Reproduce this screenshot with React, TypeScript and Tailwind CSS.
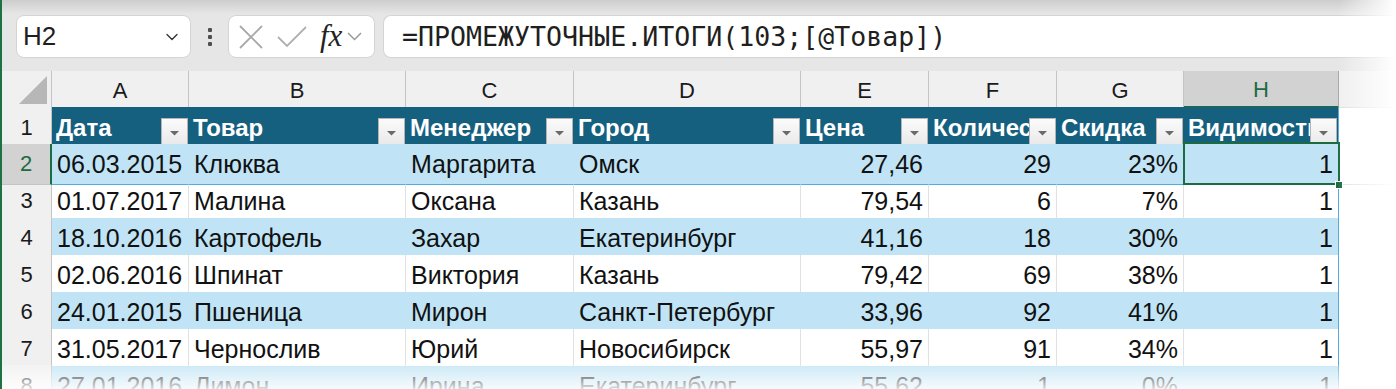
import React from 'react';
import { ChevronDown } from 'lucide-react';

// Excel-like sheet: formula bar + a styled table (Table Style Medium 2)

const GRID = 'grid grid-cols-[50px_137px_217px_168px_227px_128px_128px_127px_155px_1fr]';

const HEADERS = ['Дата', 'Товар', 'Менеджер', 'Город', 'Цена', 'Количество', 'Скидка', 'Видимость'];

const ROWS: string[][] = [
  ['06.03.2015', 'Клюква', 'Маргарита', 'Омск', '27,46', '29', '23%', '1'],
  ['01.07.2017', 'Малина', 'Оксана', 'Казань', '79,54', '6', '7%', '1'],
  ['18.10.2016', 'Картофель', 'Захар', 'Екатеринбург', '41,16', '18', '30%', '1'],
  ['02.06.2016', 'Шпинат', 'Виктория', 'Казань', '79,42', '69', '38%', '1'],
  ['24.01.2015', 'Пшеница', 'Мирон', 'Санкт-Петербург', '33,96', '92', '41%', '1'],
  ['31.05.2017', 'Чернослив', 'Юрий', 'Новосибирск', '55,97', '91', '34%', '1'],
  ['27.01.2016', 'Лимон', 'Ирина', 'Екатеринбург', '55,62', '1', '0%', '1'],
];

const LETTERS = ['A', 'B', 'C', 'D', 'E', 'F', 'G', 'H'];

const FilterButton: React.FC = () => (
  <div className="flex-shrink-0 w-[27px] h-[28px] border border-[#b4b4b4] bg-gradient-to-b from-[#fbfbfb] to-[#e9e9e9] flex items-center justify-center pt-[2px]">
    <svg width="9" height="5" viewBox="0 0 9 5">
      <path d="M0 0h9L4.5 4.5z" fill="#6a6a6a" />
    </svg>
  </div>
);

const FormulaBar: React.FC = () => (
  <div className="h-[71px] bg-[#e6e6e6] flex items-start pt-[15px] pl-[14px]">
    {/* Name box */}
    <div className="w-[175px] h-[43px] rounded-[8px] bg-white border border-[#d4d4d4] flex items-center justify-between pl-[6px] pr-[8px]">
      <span className="text-[26px] text-[#1f1f1f] leading-normal">H2</span>
      <ChevronDown size={20} strokeWidth={1.6} color="#333" />
    </div>
    {/* dots */}
    <div className="w-[37px] h-[43px] flex flex-col items-center justify-center gap-[3px]">
      <span className="w-[4px] h-[4px] bg-[#4f4f4f] rounded-[1px]" />
      <span className="w-[4px] h-[4px] bg-[#4f4f4f] rounded-[1px]" />
      <span className="w-[4px] h-[4px] bg-[#4f4f4f] rounded-[1px]" />
    </div>
    {/* cancel / enter / fx */}
    <div className="w-[147px] h-[43px] rounded-[8px] bg-white border border-[#d4d4d4] flex items-center pl-[9px]">
      <svg width="26" height="26" viewBox="0 0 26 26" fill="none" stroke="#a9a9a9" strokeWidth="1.8">
        <path d="M2 2l22 22M24 2L2 24" />
      </svg>
      <svg className="ml-[13px]" width="30" height="22" viewBox="0 0 30 22" fill="none" stroke="#b0b0b0" strokeWidth="1.8">
        <path d="M1 11l9 9L29 1" />
      </svg>
      <span className="ml-[13px] text-[31px] italic text-[#222] leading-normal [font-family:'Liberation_Serif',serif]">fx</span>
      <svg className="ml-[5px]" width="15" height="9" viewBox="0 0 15 9" fill="none" stroke="#9a9a9a" strokeWidth="1.5">
        <path d="M1 1l6.5 6.5L14 1" />
      </svg>
    </div>
    {/* formula input */}
    <div className="ml-[8px] flex-1 h-[43px] rounded-l-[8px] bg-white border border-[#d4d4d4] border-r-0 flex items-center pl-[18px]">
      <span className="text-[26.6px] text-[#1f1f1f] leading-normal [font-family:'DejaVu_Sans_Mono',monospace]">
        =ПРОМЕЖУТОЧНЫЕ.ИТОГИ(103;[@Товар])
      </span>
    </div>
  </div>
);

const ColumnLetters: React.FC = () => (
  <div className={`${GRID} h-[36px] bg-[#f0f0f0] text-[22px] text-[#1a1a1a]`}>
    <div className="border-r border-[#c4c4c4] flex items-end justify-end pr-[4px] pb-[4px]">
      <svg width="28" height="28" viewBox="0 0 28 28">
        <path d="M28 0V28H0z" fill="#b7b7b7" />
      </svg>
    </div>
    {LETTERS.map((l) =>
      l === 'H' ? (
        <div key={l} className="bg-[#d2d2d2] border-r border-[#a9a9a9] border-b-2 border-b-[#1d6b41] flex items-center justify-center pt-[2px] text-[#1d6b41]">
          {l}
        </div>
      ) : (
        <div key={l} className="border-r border-[#c4c4c4] flex items-center justify-center pt-[1px]">
          {l}
        </div>
      )
    )}
    <div className="border-b border-[#e0e0e0]" />
  </div>
);

const TableHeader: React.FC = () => (
  <div className={`${GRID} h-[37px]`}>
    <div className="bg-[#f0f0f0] border-r border-b border-[#c4c4c4] flex items-center justify-center text-[22px] text-[#1a1a1a]">1</div>
    {HEADERS.map((h, i) => (
      <div
        key={h}
        className={`bg-[#16607f] border-b border-[#52acdc] flex items-end pb-[1px] pr-[1px] ${i === 7 ? 'border-r border-r-[#52acdc]' : ''}`}
      >
        <span className="flex-1 min-w-0 self-stretch flex items-center pt-[3px] overflow-hidden whitespace-nowrap pl-[4px] text-white font-bold text-[24px] leading-normal">
          {h}
        </span>
        <FilterButton />
      </div>
    ))}
    <div className="border-b border-[#e3e3e3]" />
  </div>
);

const DataRow: React.FC<{ cells: string[]; n: number }> = ({ cells, n }) => {
  const band = n % 2 === 0;
  const selectedRow = n === 2;
  return (
    <div className={`${GRID} h-[37px] ${selectedRow ? 'relative z-10' : ''}`}>
      <div
        className={`flex items-center justify-center text-[22px] border-b border-[#c4c4c4] ${
          selectedRow ? 'bg-[#d2d2d2] text-[#1d6b41] border-r-2 border-r-[#1d6b41]' : 'bg-[#f0f0f0] text-[#1a1a1a] border-r border-r-[#c4c4c4]'
        }`}
      >
        {n}
      </div>
      {cells.map((c, i) => {
        const right = i >= 4;
        const last = i === 7;
        const vline = last ? 'border-r border-r-[#52acdc]' : band ? 'border-r border-r-[#c0e4f5]' : 'border-r border-r-[#e1e1e1]';
        return (
          <div
            key={i}
            className={`relative flex items-center px-[5px] pt-[2px] text-[25px] text-[#111] whitespace-nowrap border-b border-b-[#52acdc] ${vline} ${
              band ? 'bg-[#c0e4f5]' : 'bg-white'
            } ${right ? 'justify-end' : 'justify-start'}`}
          >
            {c}
            {selectedRow && last && (
              <>
                <div className="absolute -left-[1px] -top-[2px] -right-[2px] -bottom-[1px] border-2 border-[#1d6b41]" />
                <div className="absolute -right-[5px] -bottom-[5px] w-[8px] h-[8px] bg-[#1d6b41] border border-white" />
              </>
            )}
          </div>
        );
      })}
      <div className="border-b border-[#e3e3e3] bg-white" />
    </div>
  );
};

export default function App() {
  return (
    <div className="relative w-[1396px] h-[389px] overflow-hidden bg-white border-l-2 border-[#1e7145] [font-family:'Liberation_Sans',Arial,sans-serif]">
      <FormulaBar />
      <ColumnLetters />
      <TableHeader />
      {ROWS.map((r, i) => (
        <DataRow key={i} cells={r} n={i + 2} />
      ))}

      {/* soft shadow + fading edges of the screenshot */}
      <div className="absolute z-20 left-0 right-0 top-0 h-[14px] bg-gradient-to-b from-[#cdcdcd] to-transparent pointer-events-none" />
      <div className="absolute z-20 left-0 right-0 bottom-0 h-[24px] bg-gradient-to-b from-white/20 to-white/85 pointer-events-none" />
      <div className="absolute z-20 top-0 bottom-0 right-0 w-[58px] bg-gradient-to-r from-transparent to-white pointer-events-none" />
    </div>
  );
}
